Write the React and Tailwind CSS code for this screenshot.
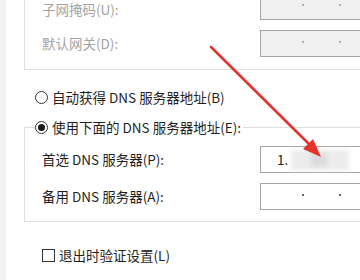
import React from "react";

const font = { fontFamily: '"Noto Sans CJK SC", "Noto Sans", sans-serif' };

const IpBox = ({ disabled, children }) => (
  <div
    className={`relative h-[27px] w-[130px] shrink-0 border border-[#a4a4a4] ${
      disabled ? "bg-[#f0f0f0]" : "bg-white"
    }`}
  >
    {children || (
      <>
        <span
          className={`absolute left-[41px] top-[10px] h-[2px] w-[2px] rounded-full ${
            disabled ? "bg-[#9a9a9a]" : "bg-[#333]"
          }`}
        />
        <span
          className={`absolute left-[78px] top-[10px] h-[2px] w-[2px] rounded-full ${
            disabled ? "bg-[#9a9a9a]" : "bg-[#333]"
          }`}
        />
      </>
    )}
  </div>
);

const Row = ({ label, muted, labelClass = "", children }) => (
  <div className="flex items-center pl-[17px]">
    <span
      className={`w-[218px] shrink-0 text-[13.5px] leading-none ${labelClass} ${
        muted ? "text-[#a3a3a3]" : "text-[#1f1f1f]"
      }`}
    >
      {label}
    </span>
    {children}
  </div>
);

const Radio = ({ checked }) => (
  <span className="flex h-[13px] w-[13px] shrink-0 items-center justify-center rounded-full border border-[#333] bg-white">
    {checked && <span className="h-[7px] w-[7px] rounded-full bg-[#1a1a1a]" />}
  </span>
);

export default function App() {
  return (
    <div
      className="relative flex h-[280px] w-[360px] overflow-hidden bg-white"
      style={font}
    >
      <div className="w-[6px] shrink-0 bg-[#f2f2f2]" />
      <div className="flex flex-1 flex-col pl-[18px]">
        {/* IP group, cut off at the top */}
        <div className="-mt-[7px] flex flex-col gap-[10px] border-b border-l border-[#dedede] pb-[12px]">
          <Row label="子网掩码(U):" muted labelClass="pt-[6px]">
            <IpBox disabled />
          </Row>
          <Row label="默认网关(D):" muted>
            <IpBox disabled />
          </Row>
        </div>

        <label className="mt-[18px] flex h-[18px] items-center gap-[4px] pl-[11px] text-[13.5px] text-[#1f1f1f]">
          <Radio />
          自动获得 DNS 服务器地址(B)
        </label>

        <fieldset className="mt-[12px] border-b border-l border-t border-[#dedede] pb-[11px]">
          <legend className="ml-[10px] flex h-[18px] items-center gap-[4px] pr-[2px] text-[13.5px] text-[#1f1f1f]">
            <Radio checked />
            使用下面的 DNS 服务器地址(E):
          </legend>
          <div className="mt-[10px] flex flex-col gap-[10px]">
            <Row label="首选 DNS 服务器(P):">
              <IpBox>
                <span className="absolute left-[16px] top-[6px] text-[13.5px] leading-none text-[#222]">
                  1.
                </span>
                <span className="absolute left-[30px] top-[3px] h-[20px] w-[58px] bg-[#ececec] blur-[2px]" />
                <span className="absolute left-[50px] top-[6px] h-[14px] w-[16px] bg-[#dcdcdc] blur-[2px]" />
              </IpBox>
            </Row>
            <Row label="备用 DNS 服务器(A):">
              <IpBox />
            </Row>
          </div>
        </fieldset>

        <label className="mt-[23px] flex items-center gap-[4px] pl-[18px] text-[13.5px] text-[#1f1f1f]">
          <span className="h-[13px] w-[13px] shrink-0 border border-[#333] bg-white" />
          退出时验证设置(L)
        </label>
      </div>

      {/* annotation arrow */}
      <svg
        className="pointer-events-none absolute inset-0"
        width="360"
        height="280"
        viewBox="0 0 360 280"
      >
        <line
          x1="211"
          y1="47"
          x2="311"
          y2="146"
          stroke="#e5322b"
          strokeWidth="2.5"
          strokeLinecap="round"
        />
        <polygon points="321,157 303,149 313,139" fill="#e5322b" />
      </svg>
    </div>
  );
}
